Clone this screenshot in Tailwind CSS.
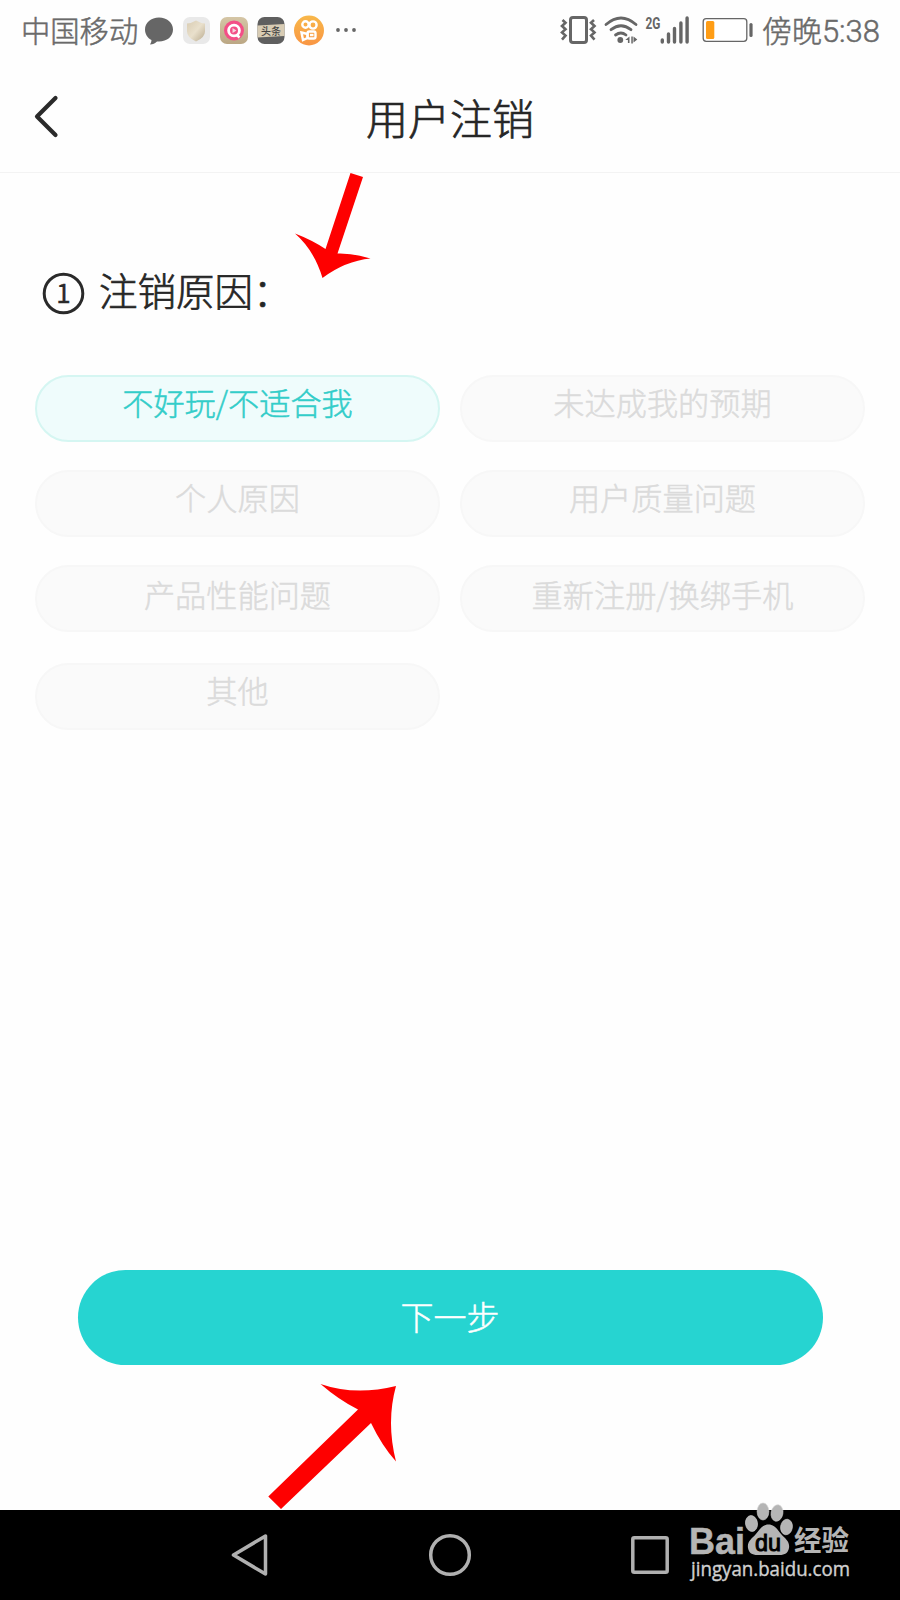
<!DOCTYPE html>
<html lang="zh-CN">
  <head>
    <meta charset="UTF-8" />
    <meta name="viewport" content="width=device-width, initial-scale=1.0" />
    <title>用户注销</title>
    <script src="https://cdn.jsdelivr.net/npm/@tailwindcss/browser@4"></script>
  </head>
  <body class="bg-[#fefefe] font-['Noto_Sans_CJK_SC',sans-serif] font-light">
    <div class="relative flex h-[1600px] w-[900px] flex-col overflow-hidden">
      <!-- status bar -->
      <div class="flex h-[60px] items-center justify-between pl-[21px] pr-[20px] text-[#6a6a6a]">
        <div class="flex h-full items-center">
          <span class="h-[60px] w-[123px] whitespace-nowrap text-[29.300px] leading-[58px] [-webkit-text-stroke:0.5px]">中国移动</span>
          <svg class="h-[60px] w-[220px]" viewBox="144 0 220 60">
            <path fill="#666" d="M159 17.500c8 0 14 5 14 12s-6 12-14 12h-2c-2 2-4 3-7 3 1-1.500 1.500-3 1.500-4.500-4-2-6.500-6-6.500-10.500 0-7 6-12 14-12z" />
            <defs>
              <linearGradient id="shield" x1="0" y1="0" x2="1" y2="1">
                <stop offset="0" stop-color="#d9ccb2" />
                <stop offset=".5" stop-color="#e9e0cc" />
                <stop offset="1" stop-color="#b9aa8e" />
              </linearGradient>
              <linearGradient id="sand" x1="0" y1="0" x2="0" y2="1">
                <stop offset="0" stop-color="#d5c6a6" />
                <stop offset="1" stop-color="#bba784" />
              </linearGradient>
              <linearGradient id="orange" x1="0" y1="0" x2="0" y2="1">
                <stop offset="0" stop-color="#f8b84a" />
                <stop offset="1" stop-color="#f99543" />
              </linearGradient>
            </defs>
            <rect x="183" y="17" width="27" height="27" rx="7" fill="#e9e9e9" />
            <path fill="url(#shield)" d="M187 23.500q5-.5 9-3 4 2.500 9 3v8q0 6-9 10-9-4-9-10z" />
            <rect x="220" y="17" width="28" height="27" rx="7" fill="url(#sand)" />
            <circle cx="234" cy="30.500" r="10" fill="#f34f87" />
            <circle cx="234" cy="30.500" r="5.400" fill="none" stroke="#fff" stroke-width="2.800" />
            <path d="M236.500 34.500l3 3" stroke="#fff" stroke-width="2.500" />
            <path d="M232.500 28l4 2.500-4 2.500z" fill="#f6d5de" />
            <rect x="257.500" y="17" width="27" height="27" rx="7" fill="#5f5f5f" />
            <path fill="#d8ccb4" d="M257.500 25.500l27-1.500v12l-27 1.500z" />
            <text x="271" y="34.500" text-anchor="middle" font-size="10" font-weight="500" fill="#444">头条</text>
            <circle cx="309" cy="30.500" r="15" fill="url(#orange)" />
            <g fill="none" stroke="#fff" stroke-width="2.400">
              <circle cx="305.500" cy="24.500" r="3.200" />
              <circle cx="313" cy="25" r="3.600" />
              <rect x="307.500" y="31.500" width="8" height="7" rx="1.800" />
              <path d="M301.500 32.500l6 1.500v4l-4.500 2z" />
              <path d="M310 35h3.500" />
            </g>
            <g fill="#666">
              <circle cx="338" cy="30" r="1.900" />
              <circle cx="346" cy="30" r="1.900" />
              <circle cx="354" cy="30" r="1.900" />
            </g>
          </svg>
        </div>
        <div class="flex h-full items-center">
          <svg class="h-[60px] w-[202px]" viewBox="560.500 0 202 60">
            <g fill="none" stroke="#666">
              <rect x="571" y="17.500" width="16" height="25" rx="2.500" stroke-width="3" />
              <path stroke-width="2.600" d="M563 20l3 2.800-3.500 3.200 3.500 3.200-3.500 3.200 3.500 3.200-3.500 4M594.500 20l-3 2.800 3.500 3.200-3.500 3.200 3.500 3.200-3.500 3.200 3.500 4" />
              <g stroke-width="2.800" stroke-linecap="round">
                <path d="M606.500 24.500q15-13 30 0" />
                <path d="M611.500 29.700q10-8 20 0" />
                <path d="M616 35q5.500-4 10.500 0" />
              </g>
            </g>
            <circle cx="620.800" cy="40" r="2.900" fill="#666" />
            <path fill="#666" d="M630 36.500v6.500h-1.600v-3h-2.600zM631.800 36.500h1.500v7h-1.500zM634 36.500l3.800 3-3.800 3z" />
            <text x="646" y="29" font-family="Roboto" font-size="16" font-weight="700" fill="#666" textLength="15" lengthAdjust="spacingAndGlyphs">2G</text>
            <g stroke="#666" stroke-width="3.400" stroke-linecap="round">
              <path d="M662.800 40v2M669 34v8M675 28.500v13.500M681.400 23v19M687.600 18v24" />
            </g>
            <rect x="703.700" y="18.700" width="43.600" height="22.600" rx="3" fill="#fff" stroke="#666" stroke-width="1.300" />
            <rect x="706.500" y="21" width="8.300" height="18" rx="1.500" fill="#ff9d15" />
            <path d="M751.500 24.500v11" stroke="#666" stroke-width="3.200" stroke-linecap="round" />
          </svg>
          <span class="h-[60px] whitespace-nowrap text-[30px] leading-[58px] [-webkit-text-stroke:0.5px]">傍晚<span class="font-[Roboto] text-[31px]">5:38</span></span>
        </div>
      </div>

      <!-- title bar -->
      <header class="flex h-[113px] items-center border-b border-[#f3f3f3] pl-[32px] text-[#262626]">
        <svg class="h-[48px] w-[30px]" viewBox="0 0 30 48" fill="none" stroke="#2a2a2a" stroke-width="4.200" stroke-linecap="round" stroke-linejoin="round">
          <path d="M23.500 6L5 24.500 23.500 43" />
        </svg>
        <h1 class="flex-1 pt-[2px] pr-[62px] text-center text-[42px] font-light leading-[60px] [-webkit-text-stroke:0.7px]">用户注销</h1>
      </header>

      <main class="flex flex-1 flex-col px-[35px]">
        <div class="mt-[88px] flex h-[64px] items-center pl-[7px] text-[#262626]">
          <svg class="h-[43px] w-[43px]" viewBox="0 0 43 43">
            <circle cx="21.500" cy="21.500" r="19.300" fill="none" stroke="#2a2a2a" stroke-width="3" />
            <text x="21.500" y="31" text-anchor="middle" font-size="26" font-weight="400" fill="#2a2a2a" stroke="#2a2a2a" stroke-width=".4">1</text>
          </svg>
          <h2 class="ml-[14px] h-[64px] text-[38.500px] font-light leading-[57px] [-webkit-text-stroke:0.700px]">注销原因：</h2>
        </div>

        <div class="mt-[50px] grid grid-cols-2 gap-x-[20px] gap-y-[28px] text-center text-[31.200px] leading-[50px] text-[#dbdbdb] [-webkit-text-stroke:0.5px]">
          <div class="h-[67px] rounded-full border-2 border-[#d5f6f2] bg-[#effcfc] text-[#33cdc9]">不好玩/不适合我</div>
          <div class="h-[67px] rounded-full border-2 border-[#f7f7f7] bg-[#fafafa]">未达成我的预期</div>
          <div class="h-[67px] rounded-full border-2 border-[#f7f7f7] bg-[#fafafa]">个人原因</div>
          <div class="h-[67px] rounded-full border-2 border-[#f7f7f7] bg-[#fafafa]">用户质量问题</div>
          <div class="h-[67px] rounded-full border-2 border-[#f7f7f7] bg-[#fafafa] pt-0.5">产品性能问题</div>
          <div class="h-[67px] rounded-full border-2 border-[#f7f7f7] bg-[#fafafa] pt-0.5">重新注册/换绑手机</div>
          <div class="mt-[2.500px] h-[67px] rounded-full border-2 border-[#f7f7f7] bg-[#fafafa]">其他</div>
        </div>

        <button class="mr-[42.500px] mb-[145px] ml-[42.500px] mt-auto h-[95px] rounded-full bg-[#26d4d1] pb-[2px] text-[33px] font-light text-white [-webkit-text-stroke:0.5px]">下一步</button>
      </main>

      <!-- android navigation -->
      <nav class="flex h-[90px] items-center bg-black">
        <svg class="h-[90px] w-[900px]" viewBox="0 0 900 90" fill="none" stroke="#b0b0b0" stroke-width="3.500" stroke-linejoin="round">
          <path d="M265.500 26v38L233.500 45z" />
          <circle cx="450" cy="45" r="19.300" />
          <rect x="632.800" y="27.800" width="34.400" height="34.400" rx="1.500" />
        </svg>
      </nav>

      <!-- pointers -->
      <svg class="absolute left-0 top-0 h-[1600px] w-[900px]" viewBox="0 0 900 1600">
        <path fill="#fe0000" d="M350.500 173L363 177 337.500 253.500Q353 253 370.500 258.500Q345 261 322.500 278Q314 250 295 233.500Q312 240 325.500 249Z" />
        <path fill="#fe0000" d="M268.300 1496.500L281 1509 371 1423Q382 1446 396 1461.500Q386 1422 396 1386Q355 1396 320.500 1384Q339 1400 358 1409.500Z" />
      </svg>

      <!-- watermark -->
      <svg class="absolute left-[680px] top-[1500px] h-[100px] w-[190px]" viewBox="680 1500 190 100">
        <g fill="#b5b5b5">
          <text x="689" y="1553.500" font-family="Liberation Sans" font-size="36" font-weight="700" stroke="#b5b5b5" stroke-width=".5" textLength="56" lengthAdjust="spacingAndGlyphs">Bai</text>
          <g stroke="#d4d4d4" stroke-width=".6">
            <ellipse cx="751.500" cy="1523.500" rx="6" ry="8" transform="rotate(-8 751.500 1523.500)" />
            <ellipse cx="763" cy="1511.500" rx="5.900" ry="8.500" />
            <ellipse cx="777" cy="1513" rx="5.900" ry="8.300" transform="rotate(10 777 1513)" />
            <ellipse cx="786.500" cy="1527" rx="5.900" ry="7.800" transform="rotate(8 786.500 1527)" />
          </g>
          <path d="M768.500 1524.500c6.500 0 9 5.500 13 10 4 4.500 8.500 7 7.500 13.500-1 5-4 7-9.500 7h-22c-5.500 0-8.500-2-9.500-7-1-6.500 3.500-9 7.500-13.500 4-4.500 6.500-10 13-10z" />
          <text x="755" y="1550.500" font-family="Liberation Sans" font-size="24" font-weight="400" fill="#000" stroke="#000" stroke-width="1" textLength="26" lengthAdjust="spacingAndGlyphs">du</text>
          <text x="794" y="1551" font-size="28" font-weight="700" textLength="55" lengthAdjust="spacingAndGlyphs">经验</text>
          <text x="691" y="1575.500" font-family="Open Sans" font-size="20.500" font-weight="400" fill="#d0d0d0" stroke="#d0d0d0" stroke-width=".4" textLength="159" lengthAdjust="spacingAndGlyphs">jingyan.baidu.com</text>
        </g>
      </svg>
    </div>
  </body>
</html>
